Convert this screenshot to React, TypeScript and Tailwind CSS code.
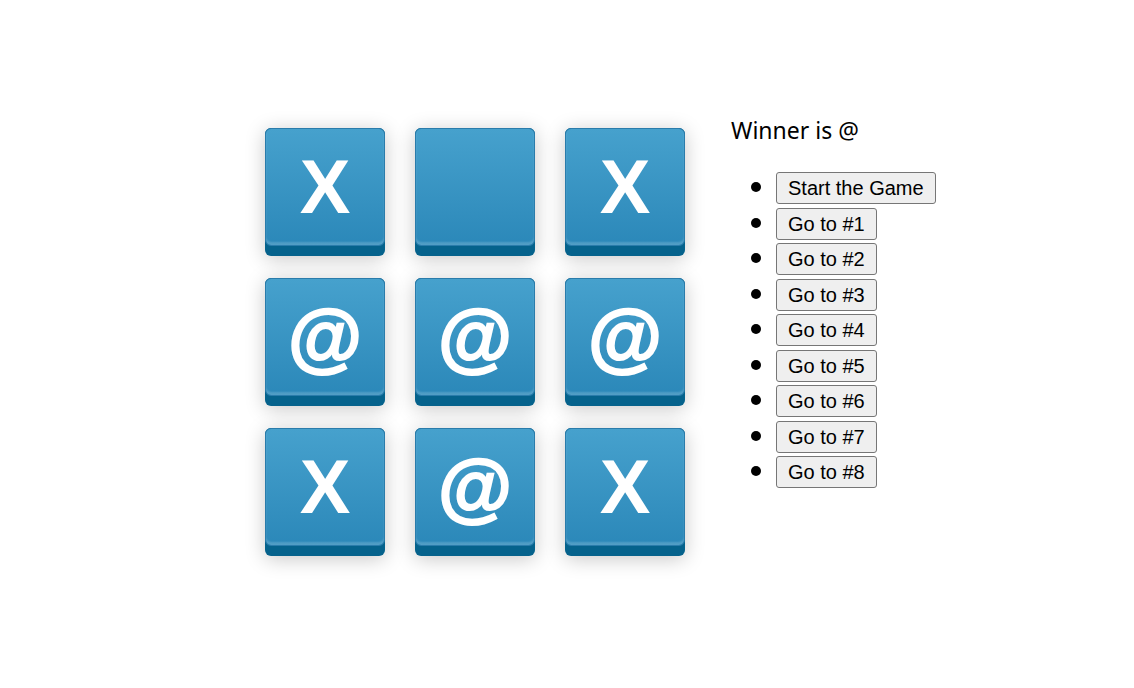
import React from "react";

const board = ["X", "", "X", "@", "@", "@", "X", "@", "X"];
const moves = ["Start the Game", "Go to #1", "Go to #2", "Go to #3", "Go to #4", "Go to #5", "Go to #6", "Go to #7", "Go to #8"];

function Tile({ value }: { value: string }) {
  // the @ glyph is thinner than the reference one, so it gets a small stroke
  const mark =
    value === "@"
      ? "font-['Liberation_Sans',Arial,sans-serif] text-[76px] font-bold leading-none text-white [-webkit-text-stroke:2px_white]"
      : "font-['Liberation_Sans',Arial,sans-serif] text-[76px] font-bold leading-none text-white";
  return (
    <div className="h-[128px] w-[120px] rounded-[6px] bg-[#05628c] shadow-[0_3px_20px_rgba(0,0,0,0.22)]">
      <div className="flex h-[118px] items-center justify-center rounded-[6px] border border-[#2a7cab] bg-gradient-to-b from-[#46a1cd] to-[#2b88b9] shadow-[inset_0_-3px_2px_rgba(255,255,255,0.18)]">
        <span className={mark}>{value}</span>
      </div>
    </div>
  );
}

export default function App() {
  return (
    <div className="flex h-[688px] w-[1134px] bg-white pl-[265px] pt-[128px]">
      <div className="grid grid-cols-[repeat(3,120px)] grid-rows-[repeat(3,128px)] gap-x-[30px] gap-y-[22px]">
        {board.map((v, i) => (
          <Tile key={i} value={v} />
        ))}
      </div>
      <div className="ml-[46px] -mt-[13px]">
        <div className="font-['Noto_Sans',sans-serif] text-[23px] leading-[31px] text-black">Winner is @</div>
        <ul className="mt-[26px] font-['Liberation_Sans',Arial,sans-serif] text-[20px]">
          {moves.map((m) => (
            <li key={m} className="flex h-[35.5px] items-start">
              <span className="ml-[20px] mt-[10px] h-[10px] w-[10px] rounded-full bg-black" />
              <button className="ml-[15px] h-[32px] rounded-[3px] border border-[#767676] bg-[#efefef] px-[11px] text-[20px] leading-none text-black">
                {m}
              </button>
            </li>
          ))}
        </ul>
      </div>
    </div>
  );
}
